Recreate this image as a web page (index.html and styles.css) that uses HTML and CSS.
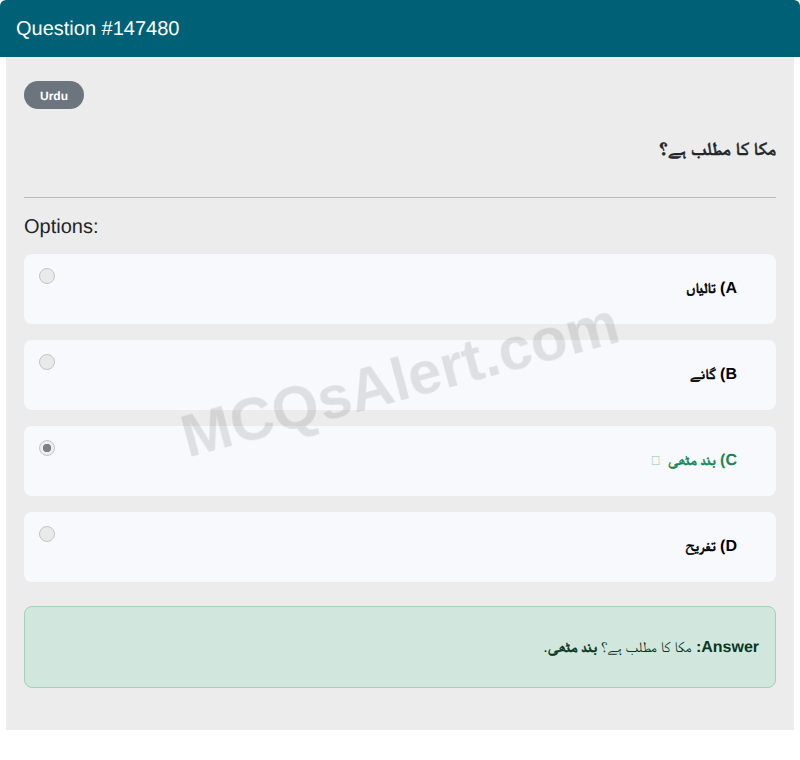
FILE: index.html
```html
<!DOCTYPE html>
<html lang="en">
<head>
<meta charset="UTF-8">
<meta name="viewport" content="width=device-width, initial-scale=1.0">
<title>Question #147480</title>
<link rel="stylesheet" href="styles.css">
</head>
<body>

<div class="watermark">MCQsAlert.com</div>

<div class="card">
<div class="card-header">Question #147480</div>
<div class="card-body">
<span class="badge">Urdu</span>
<h5 class="question" dir="rtl"><span class="ur heavy">مکا کا مطلب ہے؟</span></h5>
<hr>
<h5 class="options-title">Options:</h5>

<div class="option">
<input type="radio" name="opt" disabled>
<label dir="rtl"><b>A)</b> <b class="ur heavy">تالیاں</b></label>
</div>
<div class="option">
<input type="radio" name="opt" disabled>
<label dir="rtl"><b>B)</b> <b class="ur heavy">گانے</b></label>
</div>
<div class="option correct">
<input type="radio" name="opt" checked disabled>
<label dir="rtl"><b>C)</b> <b class="ur heavy">بند مٹھی</b> <span class="tick">&#xE000;</span></label>
</div>
<div class="option">
<input type="radio" name="opt" disabled>
<label dir="rtl"><b>D)</b> <b class="ur heavy">تفریح</b></label>
</div>

<div class="answer" dir="rtl"><b>Answer:</b> <span class="ur">مکا کا مطلب ہے؟ <b class="heavy">بند مٹھی</b></span>.</div>
</div>
</div>

</body>
</html>
```

FILE: styles.css
```css
*{box-sizing:border-box;}

body{
    font-family:"Liberation Sans",Arial,sans-serif;
    background:#fff;
    color:#212529;
    margin:0;
    font-size:16px;
    line-height:24px;
    text-rendering:geometricPrecision;
}

.ur{
    font-family:FreeSerif,"Noto Naskh Arabic","Liberation Sans",serif;
    font-size:0.9em;
}

.heavy{-webkit-text-stroke:0.45px currentColor;}

.watermark{
    position:fixed;
    top:50%;
    left:50%;
    transform:translate(-50%,-50%) rotate(-15deg);
    font-size:60px;
    line-height:72px;
    font-weight:bold;
    color:rgba(0,0,0,0.1);
    white-space:nowrap;
    pointer-events:none;
    z-index:10;
}

/* Card */
.card{
    position:relative;
    background:#fff;
}

.card:before,
.card:after{
    content:"";
    position:absolute;
    bottom:-6px;
    width:6px;
    height:6px;
    background:#ececec;
}
.card:before{left:0;border-bottom-left-radius:6px;}
.card:after{right:0;border-bottom-right-radius:6px;}

.card-header{
    height:57px;
    padding:17px 16px 0;
    background:#006076;
    color:#fff;
    font-size:20px;
    border-radius:6px 6px 0 0;
}

.card-body{
    margin:0 6px;
    height:673px;
    padding:24px 18px;
    background:#ececec;
}

.badge{
    display:block;
    width:60px;
    height:28px;
    background:#6c757d;
    color:#fff;
    border-radius:14px;
    font-size:12px;
    font-weight:bold;
    line-height:30px;
    text-align:center;
}

.question{
    margin:26px 0 0;
    height:28px;
    font-size:20px;
    line-height:28px;
    font-weight:bold;
}

hr{
    margin:34px 0 0;
    border:none;
    border-top:1px solid #bbb;
}

.options-title{
    margin:17px 0 -1px;
    font-size:20px;
    line-height:24px;
    font-weight:normal;
}

/* Options */
.option{
    position:relative;
    height:70px;
    margin-top:16px;
    padding:23px 39px 0 15px;
    background:#f8f9fd;
    border-radius:8px;
    color:#000;
    font-size:16px;
}

.option input{
    appearance:none;
    position:absolute;
    left:15px;
    top:14px;
    width:16px;
    height:16px;
    margin:0;
    background:#e9e9e9;
    border:1px solid #c4c4c4;
    border-radius:50%;
}

.option input:checked{
    background:radial-gradient(circle,#808080 0 4px,#eee 4.5px);
}

.option label{display:block;}
.correct{color:#198754;}
.tick{font-size:13px;font-weight:normal;opacity:.5;margin-right:3px;}

/* Answer */
.answer{
    margin-top:24px;
    height:82px;
    padding:29px 16px 0;
    background:#d1e7dd;
    border:1px solid #a3cfbb;
    border-radius:8px;
    color:#0a3622;
}

.answer .ur{font-size:0.93em;}
```
